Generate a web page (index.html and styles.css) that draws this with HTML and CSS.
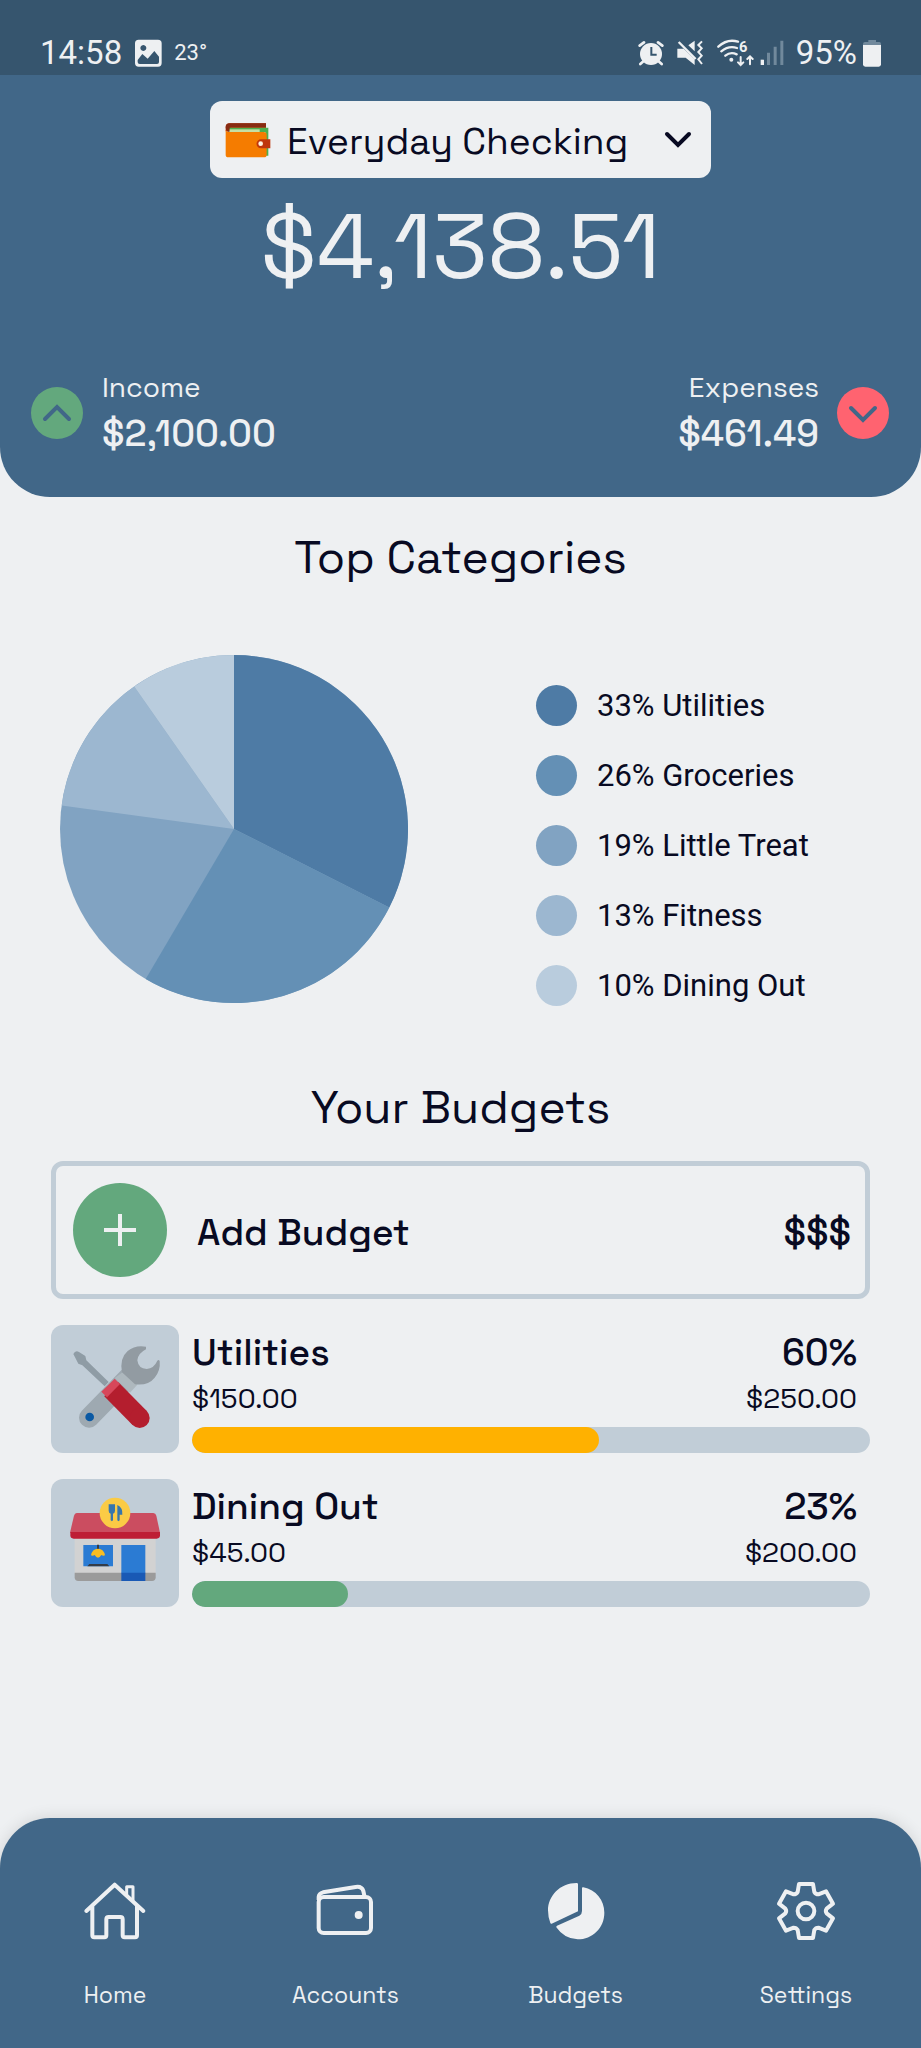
FILE: index.html
```html
<!DOCTYPE html>
<html lang="en">
<head>
<meta charset="utf-8">
<meta name="viewport" content="width=device-width, initial-scale=1">
<title>Budgets</title>
<link rel="stylesheet" href="styles.css">
</head>
<body>
<header class="summary">
  <div class="status">
    <div class="status-group">
      <span class="clock">14:58</span>
      <svg width="28" height="28" viewBox="406 115 84 84" aria-hidden="true"><path fill="#eef0f2" fill-rule="evenodd" d="M420 117H478Q489 117 489 128V187Q489 198 478 198H420Q409 198 409 187V128Q409 117 420 117ZM417 178V184Q417 190 423 190H475Q481 190 481 184V168L467 151L447 174L431 160ZM434 133A9 9 0 1 0 434.100 133Z"/></svg>
      <span class="temp">23°</span>
    </div>
    <div class="status-group">
      <svg width="26" height="26" viewBox="539 117 78 78" aria-hidden="true"><circle cx="578" cy="159" r="33" fill="#eef0f2"/><path d="M544 134L557 124M612 134L599 124M556 180L546 189M600 180L610 189" stroke="#eef0f2" stroke-width="8" stroke-linecap="round"/><path d="M579 138V161H595" fill="none" stroke="#36556e" stroke-width="6"/></svg>
      <svg width="28" height="26" viewBox="653 117 84 78" aria-hidden="true"><path fill="#eef0f2" d="M657 143H676L709 175V192L682 170H657ZM690 133L709 119V151Z"/><path d="M661 123L712 174" stroke="#eef0f2" stroke-width="7"/><path d="M731 121L720 132L730 142L720 153L730 164L720 175L731 189" fill="none" stroke="#eef0f2" stroke-width="6"/></svg>
      <div class="network">
        <svg width="38" height="28" viewBox="767 114 114 84" aria-hidden="true"><g fill="none" stroke="#eef0f2" stroke-width="7" stroke-linecap="round"><path d="M774 137Q801 112 833 122M783 151Q805 133 830 141M795 164Q811 151 829 160"/><path d="M841 168V192M833 184L841 192L849 184M869 190V166M861 174L869 166L877 174" stroke-width="6"/></g><circle cx="813" cy="176" r="6" fill="#eef0f2"/><text x="836" y="152" class="wifi-gen">6</text></svg>
        <svg width="24" height="26" viewBox="903 117 72 78" aria-hidden="true"><path fill="#eef0f2" d="M905 176H915V192H905Z"/><path fill="#71899c" d="M924 155H933V192H924ZM944 137H953V192H944ZM964 119H973V192H964Z"/></svg>
      </div>
      <div class="power">
        <span class="clock">95%</span>
        <svg width="18" height="28" viewBox="1211 114 54 84" aria-hidden="true"><path fill="#71899c" d="M1227 117H1250V123H1260Q1265 123 1265 129V133H1211V129Q1211 123 1217 123H1227Z"/><path fill="#eef0f2" d="M1211 132H1265V190Q1265 197 1258 197H1218Q1211 197 1211 190Z"/></svg>
      </div>
    </div>
  </div>

  <label class="account">
    <svg width="46" height="36" viewBox="676 362 138 108" aria-hidden="true"><path fill="#bf360c" d="M799 377V390H678V377Q678 366 690 366H799Z"/><path fill="#872b12" d="M799 366V378H695Q690 378 690 391H684Q678 388 678 378Q678 366 690 366Z"/><path fill="#4caf50" d="M690 379H806V463H797V392H690Z"/><path fill="#c5dfa4" d="M690 384H780V392H690Z"/><path fill="#f57c00" d="M678 385Q680 392 690 392H792Q801 392 801 400V460Q801 468 793 468H686Q678 468 678 460Z"/><path fill="#bf360c" d="M812 414V441H784A13 13 0 0 1 784 414Z"/><circle cx="783" cy="427" r="7" fill="#fff3e0"/></svg>
    <select class="account-select" aria-label="Account"><option>Everyday Checking</option></select>
    <svg width="30" height="18" viewBox="0 0 30 18" aria-hidden="true"><path d="M4 3L15 14L26 3" fill="none" stroke="#080a22" stroke-width="4" stroke-linecap="round"/></svg>
  </label>

  <h1 class="balance">$4,138.51</h1>

  <div class="flows">
    <div class="flow">
      <svg width="53" height="53" viewBox="0 0 53 53" aria-hidden="true"><circle cx="26" cy="26" r="26" fill="#63a87d"/><path d="M14 32L26 20L38 32" fill="none" stroke="#416788" stroke-width="4" stroke-linecap="round"/></svg>
      <div><div class="flow-label">Income</div><div class="flow-amount">$2,100.00</div></div>
    </div>
    <div class="flow flow-out">
      <div><div class="flow-label">Expenses</div><div class="flow-amount">$461.49</div></div>
      <svg width="53" height="53" viewBox="0 0 53 53" aria-hidden="true"><circle cx="26" cy="26" r="26" fill="#ff6370"/><path d="M14 21L26 33L38 21" fill="none" stroke="#416788" stroke-width="4" stroke-linecap="round"/></svg>
    </div>
  </div>
</header>

<main>
  <section>
    <h2 class="title">Top Categories</h2>
    <div class="chart">
      <svg class="pie" viewBox="0 0 348 348" role="img" aria-label="Spending by category">
        <circle cx="174" cy="174" r="174" fill="#81a3c2"/>
        <path fill="#4e7ba5" d="M174 174V0A174 174 0 0 1 329.300 252.500Z"/>
        <path fill="#6490b5" d="M174 174L329.300 252.500A174 174 0 0 1 85.700 323.900Z"/>
        <path fill="#9cb7d0" d="M174 174L1.600 150.400A174 174 0 0 1 74.200 31.500Z"/>
        <path fill="#b9ccdd" d="M174 174L74.200 31.500A174 174 0 0 1 174 0Z"/>
      </svg>
      <ul class="legend">
        <li><span class="dot dot-1"></span>33% Utilities</li>
        <li><span class="dot dot-2"></span>26% Groceries</li>
        <li><span class="dot dot-3"></span>19% Little Treat</li>
        <li><span class="dot dot-4"></span>13% Fitness</li>
        <li><span class="dot dot-5"></span>10% Dining Out</li>
      </ul>
    </div>
  </section>

  <section>
    <h2 class="title">Your Budgets</h2>
    <div class="budgets">
      <button class="add" type="button">
        <svg width="95" height="95" viewBox="0 0 95 95" aria-hidden="true"><circle cx="47" cy="47" r="47" fill="#63a87d"/><path d="M47 31V63M31 47H63" stroke="#eef0f2" stroke-width="4"/></svg>
        <span class="add-text"><span>Add Budget</span><span>$$$</span></span>
      </button>

      <article class="budget">
        <svg class="tile" width="128" height="128" viewBox="63 45 384 384" aria-hidden="true">
          <path d="M177 323L296 201" stroke="#9ea9b1" stroke-width="60" stroke-linecap="round"/>
          <path d="M254 204L282 184L322 224L300 248Z" fill="#aeb8be"/>
          <path fill="#929ba2" d="M348 110Q316 104 293 123Q268 145 276 187L315 223Q354 228 374 203Q392 182 389 153Q386 148 382 152Q372 175 350 177Q325 176 322 151Q324 130 348 118Z"/>
          <path fill="#8f9ca5" d="M130 132Q136 120 147 126L166 138L169 151L236 216L224 229L157 166L145 161Z"/>
          <path d="M244 238L329 324" stroke="#b41e2e" stroke-width="60"/>
          <circle cx="329" cy="324" r="30" fill="#b41e2e"/>
          <path fill="#d7475a" d="M214 245L254 206L270 222L231 262Z"/>
          <circle cx="179" cy="321" r="13" fill="#0b59a3"/>
        </svg>
        <div class="budget-body">
          <div class="line name"><h3>Utilities</h3><span>60%</span></div>
          <div class="line sums"><span>$150.00</span><span>$250.00</span></div>
          <progress class="bar bar-warn" value="60" max="100" aria-label="Utilities budget used"></progress>
        </div>
      </article>

      <article class="budget">
        <svg class="tile" width="128" height="128" viewBox="63 507 384 384" aria-hidden="true">
          <path fill="#d2d2d2" d="M134 680H377V792H134Z"/>
          <path fill="#9b9b9b" d="M134 788H377V802Q377 813 366 813H145Q134 813 134 802Z"/>
          <path fill="#cb4d60" d="M140 609H370Q377 609 379 617L390 668H120L132 617Q134 609 140 609Z"/>
          <path fill="#be1d35" d="M121 666H390V676Q390 686 380 686H131Q121 686 121 676Z"/>
          <path fill="#2b7bd3" d="M160 705H249V769H160ZM274 705H346V790H274Z"/>
          <path fill="#1959b5" d="M274 788H346V813H274Z"/>
          <path fill="#343c47" d="M201 704H207V718H201ZM178 762H232L238 769H172Z"/>
          <path fill="#f9bd22" d="M183 736Q186 717 204 716Q222 717 225 736Q220 739 214 735Q204 751 194 735Q188 739 183 736Z"/>
          <circle cx="255" cy="609" r="46" fill="#fbcb45"/>
          <path fill="#3776ad" d="M236 583H255V602Q255 609 249 611V631Q246 636 242 631V611Q236 609 236 602ZM262 585Q279 593 277 614H269V631Q265 636 262 631Z"/>
        </svg>
        <div class="budget-body">
          <div class="line name"><h3>Dining Out</h3><span>23%</span></div>
          <div class="line sums"><span>$45.00</span><span>$200.00</span></div>
          <progress class="bar bar-ok" value="23" max="100" aria-label="Dining Out budget used"></progress>
        </div>
      </article>
    </div>
  </section>
</main>

<nav class="tabs">
  <a class="tab" href="#home">
    <svg width="64" height="64" viewBox="252 267 192 192" fill="none" stroke="#eef0f2" stroke-width="12" stroke-linecap="round" stroke-linejoin="round" aria-hidden="true"><path d="M262 363L347 284L433 363M280 349V436Q280 442 286 442H316Q322 442 322 436V388Q322 381 329 381H364Q371 381 371 388V436Q371 442 377 442H408Q414 442 414 436V349"/><path d="M383 314V290H402V331" stroke-width="9"/></svg>
    <span>Home</span>
  </a>
  <a class="tab" href="#accounts">
    <svg width="64" height="64" viewBox="942 267 192 192" fill="none" stroke="#eef0f2" stroke-width="12" aria-hidden="true"><rect x="959" y="321" width="157" height="108" rx="15"/><path d="M959 330V321Q960 310 972 307L1070 291Q1088 288 1093 303L1096 317" stroke-linejoin="round"/><circle cx="1079" cy="375" r="12" fill="#eef0f2" stroke="none"/></svg>
    <span>Accounts</span>
  </a>
  <a class="tab" href="#budgets" aria-current="page">
    <svg width="64" height="64" viewBox="252 267 192 192" fill="#eef0f2" aria-hidden="true"><path d="M350 279Q354 279 354 283V364L275 401Q272 402 271 399Q264 381 264 361C264 318 300 279 350 279Z"/><path d="M366 294Q366 291 370 292C408 299 433 331 433 368C433 414 397 448 353 448Q313 447 289 412Q288 409 291 407L358 377Q366 373 366 363Z"/></svg>
    <span>Budgets</span>
  </a>
  <a class="tab" href="#settings">
    <svg width="64" height="64" viewBox="-96 -96 192 192" fill="none" stroke="#eef0f2" stroke-width="12" stroke-linejoin="round" aria-hidden="true"><path d="M-21 -81H21L25 -57Q29 -50 37 -50L60 -59L81 -22L62 -7Q57 0 62 7L81 22L60 59L37 50Q29 50 25 57L21 81H-21L-25 57Q-29 50 -37 50L-60 59L-81 22L-62 7Q-57 0 -62 -7L-81 -22L-60 -59L-37 -50Q-29 -50 -25 -57Z"/><circle r="25"/></svg>
    <span>Settings</span>
  </a>
</nav>
</body>
</html>
```
FILE: styles.css
```css
* {
  box-sizing: border-box;
}

body {
  margin: 0;
  min-height: 100vh;
  display: flex;
  flex-direction: column;
  background: #eef0f2;
  color: #080a22;
  font-family: "Space Grotesk", Inter, sans-serif;
}

svg {
  display: block;
  flex-shrink: 0;
}

h1, h2, h3, ul {
  margin: 0;
  padding: 0;
  font-weight: 400;
}

.summary {
  display: flex;
  flex-direction: column;
  align-items: center;
  padding-bottom: 38px;
  border-radius: 0 0 50px 50px;
  background: #416788;
  color: #eef0f2;
}

.status {
  align-self: stretch;
  display: flex;
  justify-content: space-between;
  height: 75px;
  padding: 30px 40px 0;
  background: #36556e;
  font-family: Roboto, sans-serif;
}

.status-group {
  display: flex;
  align-items: center;
  gap: 12px;
  height: 45px;
}

.network,
.power {
  display: flex;
  align-items: center;
  gap: 6px;
}

.clock {
  font-size: 33px;
  line-height: 45px;
}

.temp {
  font-size: 22px;
}

.wifi-gen {
  fill: #eef0f2;
  font: 700 44px Roboto, sans-serif;
}

.account {
  display: flex;
  align-items: center;
  gap: 16px;
  height: 77px;
  margin-top: 26px;
  padding: 0 18px 0 15px;
  border-radius: 12px;
  background: #eef0f2;
}

.account-select {
  appearance: none;
  width: 360px;
  padding: 4px 0 0;
  border: 0;
  background: none;
  color: #080a22;
  font: 400 37px/60px "Space Grotesk", Inter, sans-serif;
}

.balance {
  margin-top: 15px;
  font-size: 92px;
  line-height: 106px;
}

.flows {
  align-self: stretch;
  display: flex;
  justify-content: space-between;
  margin-top: 68px;
  padding: 0 31px;
}

.flow {
  display: flex;
  align-items: center;
  gap: 18px;
}

.flow-out {
  text-align: right;
}

.flow-label {
  font-size: 28px;
  line-height: 40px;
}

.flow-amount {
  padding-top: 2px;
  font-size: 37px;
  font-weight: 500;
  line-height: 50px;
}

.title {
  margin-top: 30px;
  font-size: 46px;
  font-weight: 400;
  line-height: 60px;
  text-align: center;
}

.chart {
  display: flex;
  gap: 128px;
  margin: 68px 60px 71px;
}

.pie {
  width: 348px;
  height: 348px;
}

.legend {
  display: flex;
  flex-direction: column;
  gap: 29px;
  padding-top: 30px;
  list-style: none;
  font-family: Roboto, sans-serif;
  font-size: 31px;
  line-height: 41px;
  white-space: nowrap;
}

.legend li {
  display: flex;
  gap: 20px;
}

.dot {
  width: 41px;
  height: 41px;
  border-radius: 50%;
}

.dot-1 { background: #4e7ba5; }
.dot-2 { background: #6490b5; }
.dot-3 { background: #81a3c2; }
.dot-4 { background: #9cb7d0; }
.dot-5 { background: #b9ccdd; }

.budgets {
  display: flex;
  flex-direction: column;
  gap: 26px;
  padding: 24px 51px;
}

.add {
  display: flex;
  align-items: center;
  gap: 29px;
  height: 138px;
  padding: 0 14px 0 17px;
  border: 5px solid #c1cdd7;
  border-radius: 12px;
  background: none;
  color: inherit;
  font: 500 37px/50px "Space Grotesk", Inter, sans-serif;
}

.add-text {
  flex: 1;
  display: flex;
  justify-content: space-between;
  padding-top: 6px;
}

.budget {
  display: flex;
  gap: 13px;
}

.tile {
  border-radius: 12px;
  background: #c1cdd7;
}

.budget-body {
  flex: 1;
}

.line {
  display: flex;
  justify-content: space-between;
  padding-right: 13px;
}

.name,
.name h3 {
  font-size: 37px;
  font-weight: 500;
  line-height: 56px;
}

.sums {
  font-size: 28px;
  line-height: 34px;
}

.bar {
  appearance: none;
  display: block;
  width: 100%;
  height: 26px;
  margin-top: 12px;
  border: 0;
  border-radius: 13px;
  overflow: hidden;
  background: #c1cdd7;
}

.bar::-webkit-progress-bar {
  background: #c1cdd7;
}

.bar::-webkit-progress-value {
  border-radius: 13px;
}

.bar-warn::-webkit-progress-value {
  background: #ffb100;
}

.bar-ok::-webkit-progress-value {
  background: #63a87d;
}

.tabs {
  display: grid;
  grid-template-columns: repeat(4, 1fr);
  height: 230px;
  margin-top: auto;
  border-radius: 50px 50px 0 0;
  background: #416788;
  box-shadow: 0 0 16px rgba(0, 0, 0, 0.12);
}

.tab {
  display: flex;
  flex-direction: column;
  align-items: center;
  gap: 36px;
  padding-top: 61px;
  color: #eef0f2;
  font-size: 23px;
  line-height: 32px;
  text-decoration: none;
}
```
